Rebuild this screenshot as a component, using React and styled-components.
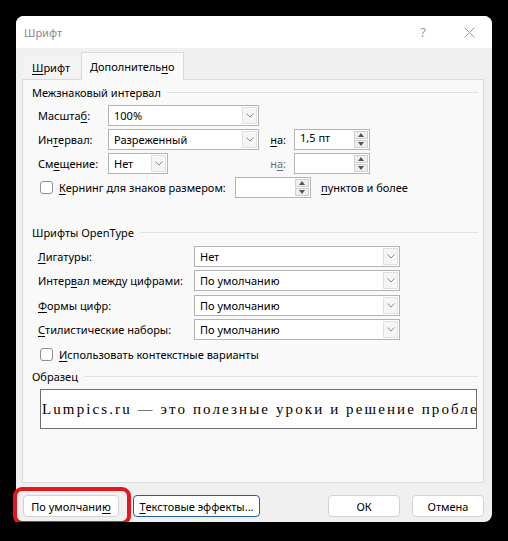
import styled, { createGlobalStyle } from "styled-components"

const GlobalStyle = createGlobalStyle`
  html, body {
    margin: 0;
    padding: 0;
    background: #000;
  }
  body {
    font-family: "Noto Sans", "Open Sans", sans-serif;
    font-size: 11px;
    color: #000;
  }
`

const Page = styled.div`
  padding: 16px 0 0 16px;
`

const Dialog = styled.div`
  width: 476px;
  height: 506px;
  background: #f0f0f0;
  border-radius: 8px;
  display: flex;
  flex-direction: column;
`

const TitleBar = styled.div`
  height: 32px;
  background: #fff;
  border-radius: 8px 8px 0 0;
  display: flex;
  align-items: center;
  padding-left: 8px;
`

const Title = styled.div`
  flex: 1;
  color: #8a8a8a;
`

const TitleButton = styled.div`
  width: 46px;
  height: 32px;
  display: flex;
  align-items: center;
  justify-content: center;
  color: #a0a0a0;
  font-size: 13px;
`

const Body = styled.div`
  padding: 0 8px 0 6px;
`

const TabRow = styled.div`
  height: 31px;
  display: flex;
  align-items: flex-end;
  padding-left: 1px;
  gap: 2px;
`

const Tab = styled.div`
  height: ${p => (p.active ? "28px" : "23px")};
  padding: 0 ${p => (p.active ? "8px" : "8px")};
  display: flex;
  align-items: center;
  box-sizing: border-box;
  background: ${p => (p.active ? "#f9f9f9" : "#f3f3f3")};
  border: 1px solid ${p => (p.active ? "#dadada" : "transparent")};
  border-bottom: none;
  margin-bottom: ${p => (p.active ? "-1px" : "1px")};
  position: relative;
  z-index: 1;
`

const Panel = styled.div`
  height: 404px;
  box-sizing: border-box;
  background: #f9f9f9;
  border: 1px solid #dadada;
  padding: 4px 5px 0 9px;
`

const GroupHeader = styled.div`
  height: 16px;
  display: flex;
  align-items: center;
  margin-top: ${p => p.top || 0}px;
  &::after {
    content: "";
    flex: 1;
    height: 1px;
    background: #e2e2e2;
    margin-left: 6px;
  }
`

const SpacingGrid = styled.div`
  margin: 3px 0 0 6px;
  display: grid;
  grid-template-columns: 70px 151px 35px 76px 1fr;
  grid-auto-rows: 24px;
  align-items: center;
`

const OpenTypeGrid = styled.div`
  margin: 4px 0 0 6px;
  display: grid;
  grid-template-columns: 156px 206px;
  grid-auto-rows: 24.5px;
  align-items: center;
`

const Label = styled.div`
  white-space: nowrap;
  color: ${p => (p.dim ? "#6d6d6d" : "#000")};
  text-align: ${p => (p.right ? "right" : "left")};
  padding-right: ${p => (p.right ? "8px" : "0")};
`

const U = styled.span`
  text-decoration: underline;
  text-underline-offset: 2px;
`

const Combo = styled.div`
  height: 21px;
  width: ${p => (p.w ? `${p.w}px` : "auto")};
  box-sizing: border-box;
  background: #fff;
  border: 1px solid #b4b4b4;
  display: flex;
  align-items: center;
`

const Value = styled.div`
  flex: 1;
  padding-left: 5px;
  white-space: nowrap;
  overflow: hidden;
`

const DropArrow = styled.div`
  width: 15px;
  height: 17px;
  margin-right: 1px;
  box-sizing: border-box;
  border: 1px solid #e0e0e0;
  background: #f5f5f5;
  display: flex;
  align-items: center;
  justify-content: center;
`

const Spin = styled.div`
  height: 21px;
  width: 76px;
  flex-shrink: 0;
  box-sizing: border-box;
  background: #fff;
  border: 1px solid #b4b4b4;
  display: flex;
  align-items: stretch;
`

const SpinButtons = styled.div`
  width: 14px;
  margin: 1px;
  display: flex;
  flex-direction: column;
  gap: 1px;
`

const SpinHalf = styled.div`
  flex: 1;
  border: 1px solid #cfcfcf;
  background: #efefef;
  display: flex;
  align-items: center;
  justify-content: center;
`

const CheckRow = styled.label`
  display: flex;
  align-items: center;
  gap: 6px;
  padding-left: 2px;
  white-space: nowrap;
  grid-column: ${p => (p.full ? "1 / -1" : "auto")};
`

const Box = styled.span`
  width: 13px;
  height: 13px;
  flex-shrink: 0;
  box-sizing: border-box;
  border: 1px solid #8f8f8f;
  border-radius: 3px;
  background: #fff;
`

const KerningRow = styled.div`
  grid-column: 1 / -1;
  display: flex;
  align-items: center;
`

const KerningLabel = styled.div`
  width: 197px;
  flex-shrink: 0;
`

const Suffix = styled.div`
  margin-left: 10px;
`

const SampleBox = styled.div`
  margin: 4px 1px 0 8px;
  height: 40px;
  box-sizing: border-box;
  background: #fff;
  border: 1px solid #6e6e6e;
  overflow: hidden;
  white-space: nowrap;
  font-family: "Liberation Serif", "DejaVu Serif", serif;
  font-size: 15px;
  letter-spacing: 2.1px;
  line-height: 38px;
  padding-left: 1px;
`

const Footer = styled.div`
  display: flex;
  align-items: center;
  padding: 12px 8px 0 7px;
`

const Button = styled.div`
  height: 22px;
  width: ${p => p.w}px;
  margin-left: ${p => p.ml || 0}px;
  box-sizing: border-box;
  background: #fff;
  border: 1px solid ${p => (p.focused ? "#1f5f9e" : "#d2d2d2")};
  border-radius: 4px;
  display: flex;
  align-items: center;
  justify-content: center;
  white-space: nowrap;
`

const Highlight = styled.div`
  position: relative;
  &::after {
    content: "";
    position: absolute;
    left: -10px;
    right: -12px;
    top: -8px;
    bottom: -8px;
    border: 4px solid #e5161d;
    border-radius: 9px;
  }
`

const Chevron = () => (
  <svg width="8" height="5" viewBox="0 0 8 5">
    <path d="M0.5 0.5 L4 4 L7.5 0.5" fill="none" stroke="#8a8a8a" strokeWidth="1" />
  </svg>
)

const Tri = ({ up }) => (
  <svg width="6" height="4" viewBox="0 0 6 4">
    <path d={up ? "M0 4 L3 0 L6 4 Z" : "M0 0 L3 4 L6 0 Z"} fill="#555" />
  </svg>
)

const Select = ({ w, children }) => (
  <Combo w={w}>
    <Value>{children}</Value>
    <DropArrow>
      <Chevron />
    </DropArrow>
  </Combo>
)

const Spinner = ({ children }) => (
  <Spin>
    <Value>{children}</Value>
    <SpinButtons>
      <SpinHalf><Tri up /></SpinHalf>
      <SpinHalf><Tri /></SpinHalf>
    </SpinButtons>
  </Spin>
)

const CloseIcon = () => (
  <svg width="11" height="11" viewBox="0 0 11 11">
    <path d="M0.5 0.5 L10.5 10.5 M10.5 0.5 L0.5 10.5" stroke="#9a9a9a" strokeWidth="1" />
  </svg>
)

const openType = [
  [<><U>Л</U>игатуры:</>, "Нет"],
  [<>Интер<U>в</U>ал между цифрами:</>, "По умолчанию"],
  [<><U>Ф</U>ормы цифр:</>, "По умолчанию"],
  [<><U>С</U>тилистические наборы:</>, "По умолчанию"],
]

export default function App() {
  return (
    <Page>
      <GlobalStyle />
      <Dialog>
        <TitleBar>
          <Title>Шрифт</Title>
          <TitleButton>?</TitleButton>
          <TitleButton><CloseIcon /></TitleButton>
        </TitleBar>
        <Body>
          <TabRow>
            <Tab><U>Ш</U>рифт</Tab>
            <Tab active>Дополнитель<U>н</U>о</Tab>
          </TabRow>
          <Panel>
            <GroupHeader>Межзнаковый интервал</GroupHeader>
            <SpacingGrid>
              <Label>Масшта<U>б</U>:</Label>
              <Select>100%</Select>
              <span />
              <span />
              <span />

              <Label>Ин<U>т</U>ервал:</Label>
              <Select>Разреженный</Select>
              <Label right><U>н</U>а:</Label>
              <Spinner>1,5 пт</Spinner>
              <span />

              <Label>См<U>е</U>щение:</Label>
              <Select w={60}>Нет</Select>
              <Label right dim>н<U>а</U>:</Label>
              <Spinner />
              <span />

              <KerningRow>
                <KerningLabel>
                  <CheckRow>
                    <Box />
                    <span><U>К</U>ернинг для знаков размером:</span>
                  </CheckRow>
                </KerningLabel>
                <Spinner />
                <Suffix><U>п</U>унктов и более</Suffix>
              </KerningRow>
            </SpacingGrid>

            <GroupHeader top={25}>Шрифты OpenType</GroupHeader>
            <OpenTypeGrid>
              {openType.map(([label, value], i) => [
                <Label key={"l" + i}>{label}</Label>,
                <Select key={"s" + i}>{value}</Select>,
              ])}
              <CheckRow full>
                <Box />
                <span><U>И</U>спользовать контекстные варианты</span>
              </CheckRow>
            </OpenTypeGrid>

            <GroupHeader top={2}>Образец</GroupHeader>
            <SampleBox>Lumpics.ru — это полезные уроки и решение проблем с компьютером</SampleBox>
          </Panel>
        </Body>
        <Footer>
          <Highlight>
            <Button w={96}>По умолчани<U>ю</U></Button>
          </Highlight>
          <Button w={127} ml={14} focused><U>Т</U>екстовые эффекты...</Button>
          <Button w={72} ml={68}>ОК</Button>
          <Button w={72} ml={12}>Отмена</Button>
        </Footer>
      </Dialog>
    </Page>
  )
}
